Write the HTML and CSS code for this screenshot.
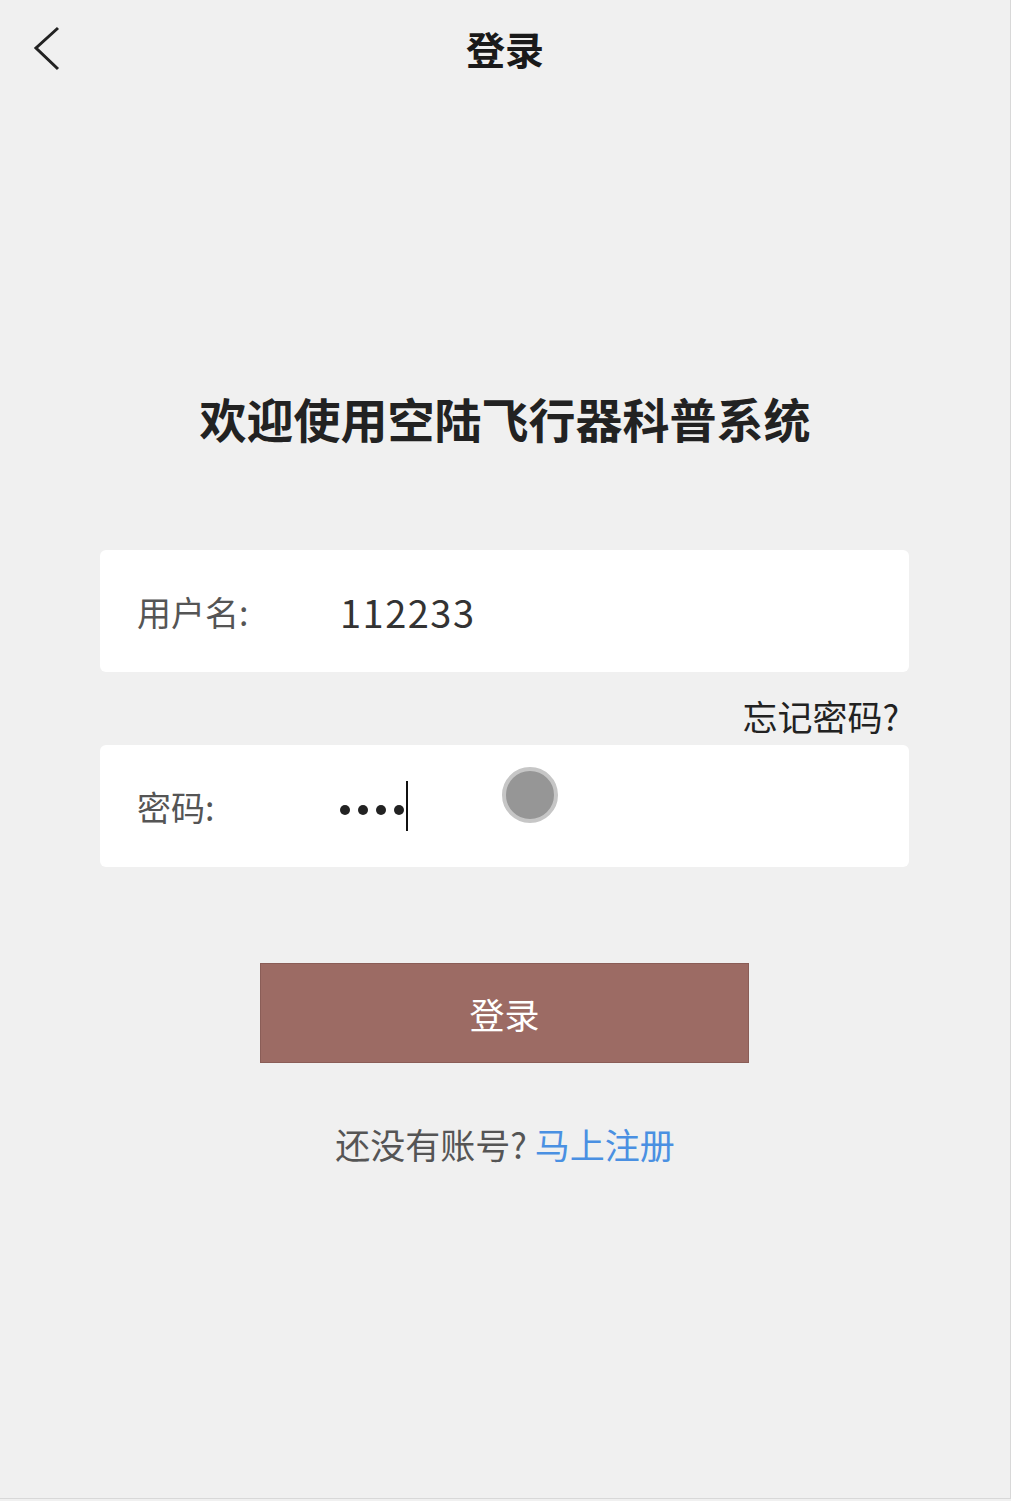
FILE: index.html
```html
<!DOCTYPE html>
<html lang="zh-CN">
<head>
    <meta charset="UTF-8">
    <meta name="viewport" content="width=device-width, initial-scale=1.0">
    <title>登录</title>
    <link rel="stylesheet" href="styles.css">
</head>
<body>
    <div class="page">
        <header class="topbar">
            <a href="#" class="back">
                <svg width="30" height="46" viewBox="0 0 30 46">
                    <polyline points="26,3 4,23 26,44" fill="none" stroke="#222" stroke-width="3" stroke-linejoin="miter"/>
                </svg>
            </a>
            <h1 class="topbar-title">登录</h1>
            <span></span>
        </header>

        <h2 class="welcome">欢迎使用空陆飞行器科普系统</h2>

        <form class="login-form">
            <div class="field">
                <label class="field-label">用户名:</label>
                <span class="field-value">112233</span>
            </div>
            <div class="forgot">
                <a href="#">忘记密码?</a>
            </div>
            <div class="field field-password">
                <label class="field-label">密码:</label>
                <span class="dots">
                    <i></i><i></i><i></i><i></i>
                    <b class="caret"></b>
                </span>
                <span class="touch"></span>
            </div>
            <button type="button" class="submit">登录</button>
        </form>

        <p class="register">还没有账号?&nbsp;<a href="#">马上注册</a></p>
    </div>
</body>
</html>
```

FILE: styles.css
```css
body {
    margin: 0;
    background: #f0f0f0;
    font-family: "Noto Sans CJK SC", "Noto Sans", sans-serif;
    color: #333;
}

.page {
    height: 1499px;
    border-right: 1px solid #d8d8d8;
    border-bottom: 1px solid #d8d8d8;
    box-sizing: border-box;
}

.topbar {
    height: 100px;
    display: grid;
    grid-template-columns: 1fr auto 1fr;
    align-items: center;
    padding: 0 30px;
}

.back {
    display: flex;
    align-items: center;
}

.back svg {
    margin-top: -4px;
    margin-left: 2px;
}

.topbar-title {
    margin: 0;
    font-size: 39px;
    font-weight: 700;
    color: #1a1a1a;
    line-height: 50px;
    margin-top: -4px;
}

.welcome {
    margin: 288px 0 0;
    text-align: center;
    font-size: 47px;
    font-weight: 700;
    line-height: 60px;
    color: #222;
}

.login-form {
    margin: 102px 101px 0 100px;
}

.field {
    height: 122px;
    background: #fff;
    border-radius: 6px;
    display: flex;
    align-items: center;
    padding-left: 37px;
    position: relative;
}

.field-label {
    width: 203px;
    font-size: 34px;
    color: #555;
}

.field-value {
    font-size: 38px;
    color: #333;
    letter-spacing: 1.5px;
}

.forgot {
    height: 73px;
    box-sizing: border-box;
    padding: 21px 10px 0 0;
    text-align: right;
}

.forgot a {
    font-size: 35px;
    line-height: 46px;
    color: #222;
    text-decoration: none;
}

.dots {
    display: flex;
    align-items: center;
    gap: 8px;
    margin-top: 8px;
}

.dots i {
    width: 10px;
    height: 10px;
    border-radius: 50%;
    background: #222;
}

.dots .caret {
    width: 2px;
    height: 50px;
    background: #111;
    margin-left: -6px;
    margin-top: -8px;
}

.touch {
    position: absolute;
    left: 402px;
    top: 22px;
    width: 48px;
    height: 48px;
    border-radius: 50%;
    background: #969696;
    border: 4px solid #c6c6c6;
}

.submit {
    display: block;
    width: 489px;
    height: 100px;
    margin: 96px auto 0;
    background: #9c6b64;
    border: 1px solid #8a5d57;
    color: #fff;
    font-family: inherit;
    font-size: 35px;
    cursor: pointer;
}

.register {
    margin: 58px 0 0;
    text-align: center;
    font-size: 35px;
    line-height: 46px;
    color: #555;
}

.register a {
    color: #4a90e2;
    text-decoration: none;
}
```
